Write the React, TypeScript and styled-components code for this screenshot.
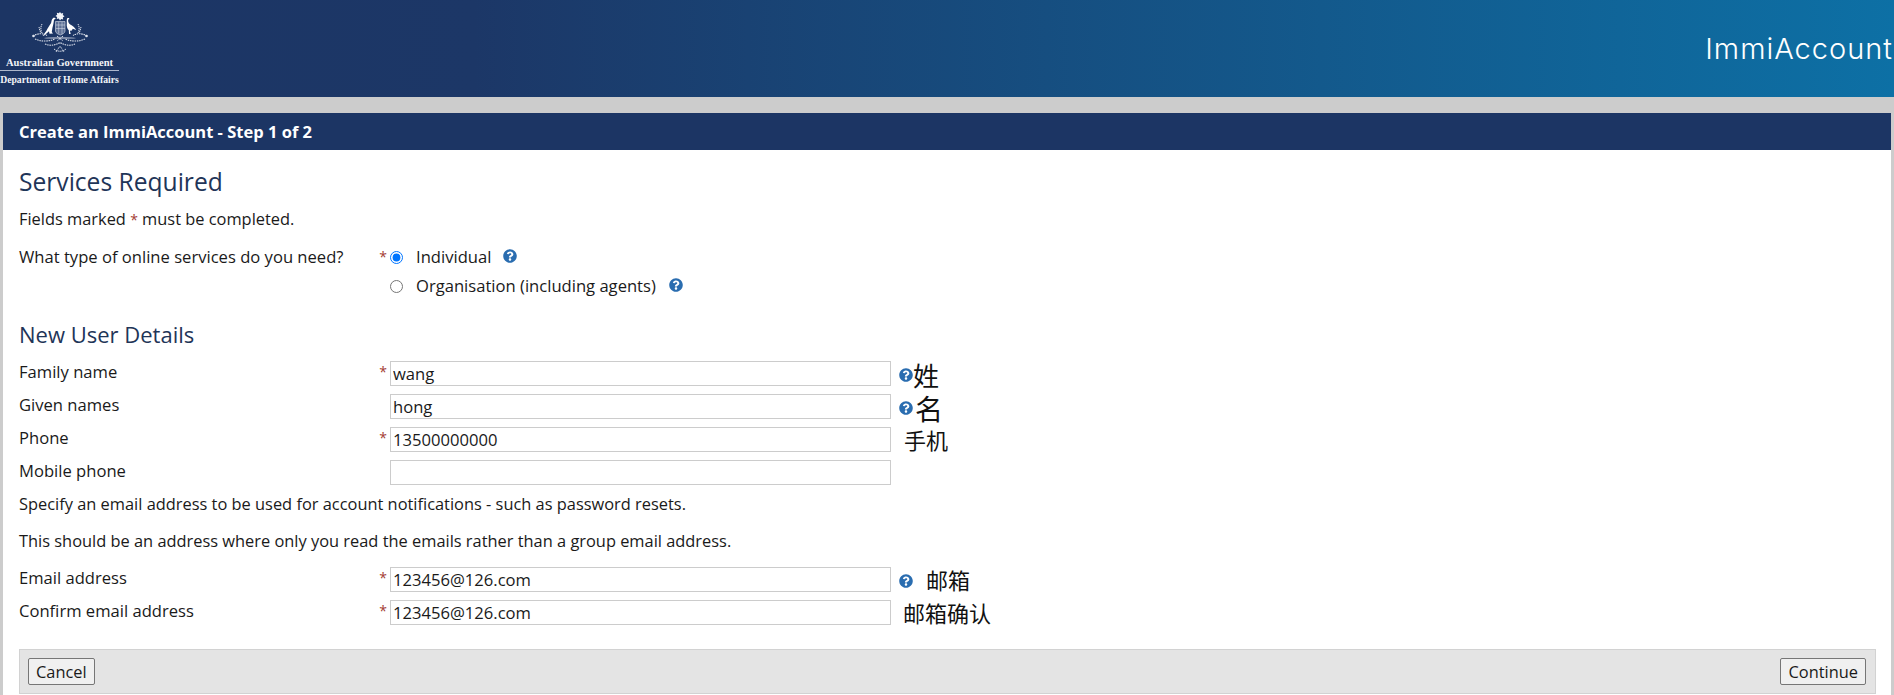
import React from 'react';
import styled, { createGlobalStyle } from 'styled-components';
import { FaQuestionCircle } from 'react-icons/fa';

const GlobalStyle = createGlobalStyle`
  html, body {
    margin: 0;
    padding: 0;
    background: #cccccc;
    font-family: 'Open Sans', 'Liberation Sans', 'Noto Sans CJK SC', sans-serif;
    color: #1a1a1a;
  }
  * { box-sizing: border-box; }
`;

const Header = styled.header`
  height: 97px;
  display: flex;
  align-items: flex-start;
  justify-content: space-between;
  background: linear-gradient(90deg, #1c3564 0%, #1c3767 25%, #0d70a5 100%);
`;
const Logo = styled.div`
  width: 119px;
  padding-top: 12px;
  display: flex;
  flex-direction: column;
  align-items: center;
  color: #f2f4f8;
  font-family: 'Liberation Serif', serif;
  font-weight: 700;
`;
const LogoLine = styled.div<{ $size: number }>`
  font-size: ${(p) => p.$size}px;
  line-height: 11px;
  white-space: nowrap;
`;
const LogoName = styled(LogoLine)`
  margin-top: 3px;
`;
const LogoRule = styled.div`
  width: 119px;
  height: 1px;
  margin: 2px 0 3px;
  background: #aeb8cc;
`;
const Brand = styled.div`
  margin: 31px 1px 0 0;
  font-family: Inter, 'Open Sans', sans-serif;
  font-weight: 300;
  font-size: 29px;
  letter-spacing: 1px;
  line-height: 36px;
  color: #ffffff;
`;

const Panel = styled.main`
  margin: 16px 3px 0;
  background: #ffffff;
  height: 582px;
`;
const TitleBar = styled.h1`
  margin: 0;
  height: 37px;
  padding: 0 16px;
  display: flex;
  align-items: center;
  background: #1c3564;
  color: #ffffff;
  font-size: 16.5px;
  font-weight: 700;
`;
const Body = styled.div`
  padding: 16px 16px 0;
`;
const Heading = styled.h2<{ $size: number; $top: number; $bottom: number }>`
  margin: ${(p) => p.$top}px 0 ${(p) => p.$bottom}px;
  font-size: ${(p) => p.$size}px;
  line-height: 32px;
  font-weight: 400;
  color: #1f3558;
`;
const Text = styled.p<{ $top: number }>`
  margin: ${(p) => p.$top}px 0 0;
  font-size: 16.4px;
  line-height: 22px;
`;
const Mark = styled.span`
  color: #a33b32;
  font-size: 14px;
`;
const Row = styled.div<{ $top?: number; $bottom?: number }>`
  display: grid;
  grid-template-columns: 352px 19px 501px auto;
  align-items: start;
  min-height: 25px;
  margin-top: ${(p) => p.$top ?? 0}px;
  margin-bottom: ${(p) => p.$bottom ?? 8}px;
  font-size: 16.6px;
`;
const Label = styled.label`
  line-height: 22px;
`;
const Required = styled.span`
  color: #a33b32;
  font-size: 14px;
  line-height: 22px;
  text-align: right;
  padding-right: 3px;
`;
const Input = styled.input`
  width: 501px;
  height: 25px;
  padding: 0 2px;
  border: 1px solid #cccccc;
  outline: none;
  font: inherit;
  color: #1a1a1a;
  background: #ffffff;
`;
const RadioList = styled.div`
  display: flex;
  flex-direction: column;
  gap: 7px;
  grid-column: 3 / 5;
`;
const RadioRow = styled.label`
  height: 22px;
  display: flex;
  align-items: center;
  line-height: 22px;
`;
const Radio = styled.input`
  width: 13px;
  height: 13px;
  margin: 0 13px 0 0;
  accent-color: #0075ff;
`;
const HelpIcon = styled(FaQuestionCircle)<{ $left: number }>`
  margin-left: ${(p) => p.$left}px;
  width: 14px;
  height: 14px;
  color: #2a6db0;
  flex: none;
`;
const RadioHelp = styled(HelpIcon)`
  margin-top: -3px;
`;
const Note = styled.div`
  display: flex;
  align-items: center;
  height: 25px;
  padding-top: 2px;
  white-space: nowrap;
`;
const NoteText = styled.span<{ $size: number; $left: number; $lift?: number }>`
  margin-left: ${(p) => p.$left}px;
  margin-top: ${(p) => -(p.$lift ?? 0)}px;
  font-family: 'Noto Sans CJK SC', sans-serif;
  font-size: ${(p) => p.$size}px;
  line-height: 25px;
  color: #111111;
`;
const Footer = styled.div`
  height: 45px;
  margin-top: 24px;
  margin-right: -1px;
  padding: 0 9px 0 8px;
  display: flex;
  align-items: center;
  justify-content: space-between;
  background: #e4e4e4;
  border: 1px solid #d2d2d2;
`;
const Button = styled.button`
  height: 27px;
  padding: 0 7px;
  background: #f0f0f0;
  border: 1px solid #767676;
  border-radius: 2px;
  font-family: inherit;
  font-size: 16.4px;
  color: #1a1a1a;
`;

const Crest = () => (
  <svg width="56" height="42" viewBox="0 0 56 42" fill="none">
    <path d="M28 0l1.200 1.600 2-.5-.4 2 1.700 1.200-1.700 1.200.4 2-2-.5L28 8.600l-1.200-2-2 .5.4-2-1.700-1.200 1.700-1.200-.4-2 2 .5z" fill="#f2f4f8" />
    <path d="M21 6c1.200-.6 2.600-.1 2.600.7l-1.600 1c-.3 3.200-1 6-1.600 8.300l-.6 4 1.200 1.500-3.500.2-.5-2.500-4.800 4.400-1.600.4 3.800-5.200c1.500-3.200 3.500-5.800 4.700-7.800.5-2.200.7-4 1.900-4.800z" fill="#ffffff" />
    <path d="M35.500 6.200c1.300-.6 2.200.2 1.700 1l-1 .4c-.3 2 .3 3.800 2 5 2.500 1 4.500 3 6 5.400l-3.500-1.300-.8 1.800-2 .2.800 3.200h-1.700l-.2-3.700c-1.700-1.700-2.300-4-2-6.800.1-2.300-.4-4 .7-5.700z" fill="#ffffff" />
    <path d="M23.500 9.500h9.500v9.500c0 2-2.500 3.200-4.750 4-2.250-.8-4.750-2-4.750-4z" fill="#5f7196" stroke="#dfe4ee" strokeWidth="0.6" />
    <path d="M24 13h9M24 16.500h9M26.700 10v11.500M30 10v12" stroke="#dfe4ee" strokeWidth="0.5" />
    <path d="M1 24c5-3 10-3 14-.5M55 24c-5-3-10-3-14-.5M3 27c7 3 14 2.500 20 0M53 27c-7 3-14 2.500-20 0M13 32c5 2 10 1.500 15-1.500 5 3 10 3.500 15 1.500" stroke="#dfe4ee" strokeWidth="1.100" strokeDasharray="1.500 0.800" />
    <path d="M10 12c-1.500 3-1.500 6 0 9M46 12c1.500 3 1.500 6 0 9M7 15c.5 2 .8 4 2 6M49 15c-.5 2-.8 4-2 6M22 37c4 3 8 3 12 0M25 24l6 5M31 24l-6 5" stroke="#dfe4ee" strokeWidth="1" strokeDasharray="1.300 0.700" />
    <ellipse cx="28" cy="26" rx="16" ry="1.200" fill="#dfe4ee" fillOpacity="0.5" />
    <circle cx="1.500" cy="24" r="1.300" fill="#dfe4ee" />
    <circle cx="54.500" cy="24" r="1.300" fill="#dfe4ee" />
    <path d="M24 40l4-6 4 6" stroke="#dfe4ee" strokeWidth="1" strokeDasharray="1 0.700" />
  </svg>
);

const Field = ({ label, value = '', required = false, children }: { label: string; value?: string; required?: boolean; children?: React.ReactNode }) => (
  <Row>
    <Label>{label}</Label>
    <Required>{required ? '*' : ''}</Required>
    <Input defaultValue={value} />
    <Note>{children}</Note>
  </Row>
);

const App = () => {
  return (
    <>
      <GlobalStyle />
      <Header>
        <Logo>
          <Crest />
          <LogoName $size={10.500}>Australian Government</LogoName>
          <LogoRule />
          <LogoLine $size={9.700}>Department of Home Affairs</LogoLine>
        </Logo>
        <Brand>ImmiAccount</Brand>
      </Header>
      <Panel>
        <TitleBar>Create an ImmiAccount - Step 1 of 2</TitleBar>
        <Body>
          <Heading $size={24.600} $top={0} $bottom={0}>Services Required</Heading>
          <Text $top={10}>
            Fields marked <Mark>*</Mark> must be completed.
          </Text>
          <Row $top={15} $bottom={0}>
            <Label>What type of online services do you need?</Label>
            <Required>*</Required>
            <RadioList>
              <RadioRow>
                <Radio type="radio" name="service" defaultChecked />
                Individual
                <RadioHelp $left={12} />
              </RadioRow>
              <RadioRow>
                <Radio type="radio" name="service" />
                Organisation (including agents)
                <RadioHelp $left={13} />
              </RadioRow>
            </RadioList>
          </Row>
          <Heading $size={22} $top={21} $bottom={11}>New User Details</Heading>
          <Field label="Family name" value="wang" required>
            <HelpIcon $left={8} />
            <NoteText $size={26} $left={0}>姓</NoteText>
          </Field>
          <Field label="Given names" value="hong">
            <HelpIcon $left={8} />
            <NoteText $size={28} $left={2} $lift={-2}>名</NoteText>
          </Field>
          <Field label="Phone" value="13500000000" required>
            <NoteText $size={22} $left={13} $lift={2}>手机</NoteText>
          </Field>
          <Field label="Mobile phone" />
          <Text $top={7}>Specify an email address to be used for account notifications - such as password resets.</Text>
          <Text $top={15}>This should be an address where only you read the emails rather than a group email address.</Text>
          <Row $top={15}>
            <Label>Email address</Label>
            <Required>*</Required>
            <Input defaultValue="123456@126.com" />
            <Note>
              <HelpIcon $left={8} />
              <NoteText $size={22} $left={13} $lift={2}>邮箱</NoteText>
            </Note>
          </Row>
          <Field label="Confirm email address" value="123456@126.com" required>
            <NoteText $size={22} $left={12} $lift={3}>邮箱确认</NoteText>
          </Field>
          <Footer>
            <Button>Cancel</Button>
            <Button>Continue</Button>
          </Footer>
        </Body>
      </Panel>
    </>
  );
};

export default App;
